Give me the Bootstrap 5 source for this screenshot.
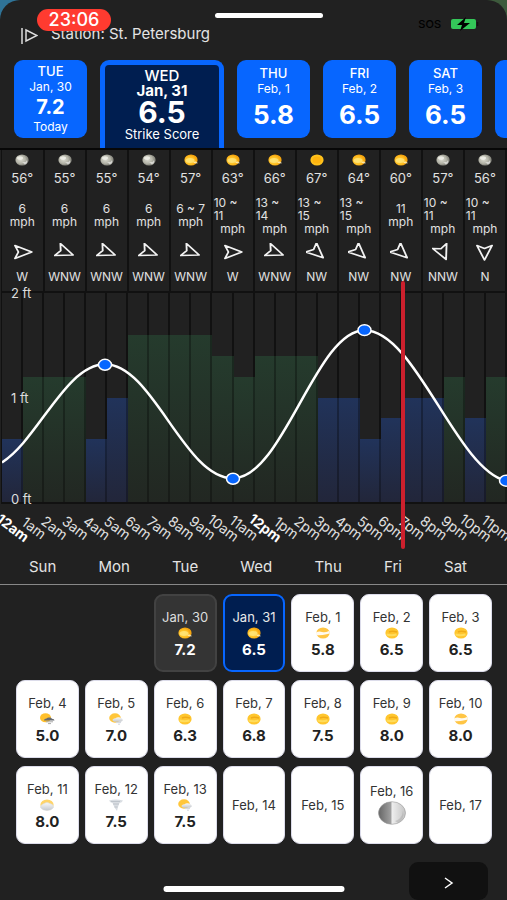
<!DOCTYPE html>
<html lang="en">
<head>
<meta charset="utf-8">
<meta name="viewport" content="width=device-width, initial-scale=1">
<title>Strike Score – St. Petersburg</title>
<link href="https://cdn.jsdelivr.net/npm/bootstrap@5.3.0/dist/css/bootstrap.min.css" rel="stylesheet">
<style>
  :root { --ink:#212121; --blue:#0766ff; --navy:#001e50; --rule:#111; }
  body { font-family:Inter,"Liberation Sans",sans-serif; background:linear-gradient(90deg,#2f7397 50%,#3d5a3c 50%); color:#e4e4e4; overflow-x:hidden; }
  button { font-family:inherit; }
  .sheet { background:var(--ink); border-radius:20px 20px 0 0; overflow:hidden; }
  .topbar { height:60px; padding:24px 20px 0; gap:13px; font-size:15px; line-height:20px; }
  .grabber { left:53%; top:13px; width:108px; height:5px; background:#fff; }
  .clock { left:37px; top:9px; width:74px; height:22px; background:#ff3b30; color:#fff; font-size:18px; line-height:22px; font-weight:500; }
  .status { right:28px; top:15px; color:#000; font-size:11px; line-height:18px; font-weight:500; }
  .days { height:88px; gap:13px; padding-left:14px; }
  .day { width:73px; height:78px; border:0; border-radius:9px; background:var(--blue); color:#fff; font-size:12px; line-height:16px; padding:0; }
  .day .name { font-size:13px; font-weight:500; }
  .day .score { font-size:26px; line-height:36px; font-weight:700; }
  .day .score.short { font-size:20px; line-height:24px; }
  .day.picked { width:124px; height:89px; border:5px solid var(--blue); border-bottom:0; border-radius:9px 9px 0 0; background:var(--navy); font-size:13px; line-height:16px; padding-top:3px; }
  .day.picked .name { font-size:15px; line-height:15px; }
  .day.picked .date { font-size:15px; line-height:15px; font-weight:700; }
  .day.picked .score { font-size:30px; line-height:28px; }
  .hourly { border-top:2px solid #070707; padding-left:1px; }
  .hours { table-layout:fixed; font-size:12px; line-height:13px; color:#e2e2e2; border-left:1px solid var(--rule); }
  .hours td { padding:0; text-align:center; vertical-align:middle; border-right:2px solid var(--rule); white-space:nowrap; }
  .r-sky { height:20px; } .r-temp { height:17px; font-size:13px; } .r-wind { height:56px; }
  .r-dir { height:17px; } .r-name { height:30px; font-size:12px; }
  .hours svg { display:block; margin:auto; }
  .speed { display:block; text-align:left; padding-left:1px; }
  .plot { height:213px; border-top:2px solid var(--rule); border-bottom:2px solid var(--rule); border-left:1px solid var(--rule); }
  .slot { flex:1 1 0; display:flex; align-items:flex-end; background:linear-gradient(90deg,transparent calc(100% - 2px),var(--rule) 0); }
  .slot i { display:block; width:100%; border-right:2px solid transparent; }
  .good i { background:linear-gradient(90deg,transparent calc(100% - 2px),rgba(0,0,0,.3) 0) border-box,linear-gradient(#253b2d,#222722) border-box; }
  .fair i { background:linear-gradient(90deg,transparent calc(100% - 2px),rgba(0,0,0,.3) 0) border-box,linear-gradient(#21335a,#22263a) border-box; }
  .tide { inset:0; width:100%; height:100%; }
  .feet { left:9px; font-size:13px; line-height:16px; color:#ddd; }
  .feet.zero { bottom:-5px; }
  .now { left:79%; top:-12px; width:4px; height:268px; border-radius:2px; background:#cc202d; z-index:2; }
  .ticks { height:45px; padding:2px 0 0 2px; font-size:14px; line-height:16px; color:#e0e0e0; }
  .ticks span { flex:1 1 0; min-width:0; display:flex; justify-content:center; align-items:center; white-space:nowrap; }
  .ticks b, .ticks em { flex:none; font-style:normal; font-weight:400; transform:rotate(37deg); }
  .ticks b { font-weight:700; color:#fff; }
  .weekdays { padding:7px 40px 6px 29px; font-size:15px; line-height:22px; border-bottom:1px solid #888; }
  .month { display:grid; grid-template-columns:repeat(7,1fr); gap:8px 6px; padding:9px 15px 0 16px; }
  .cell { height:78px; border:1px solid #dcdcea; border-radius:9px; background:#fff; color:#333; font-size:13px; line-height:16px; padding:0; white-space:nowrap; }
  .cell svg { margin:2px 0; }
  .cell strong { font-size:15px; line-height:17px; color:#222; }
  .cell.past { background:#343434; border:2px solid #424242; color:#ddd; }
  .cell.today { background:var(--navy); border:2px solid var(--blue); color:#e8e8e8; }
  .past strong, .today strong { color:#fff; }
  .foot { padding-top:18px; padding-right:19px; }
  .next { width:79px; height:38px; border:0; border-radius:9px; background:#111; color:#fff; }
  .home { bottom:8px; width:181px; height:6px; background:#fff; }
</style>
</head>
<body>
<svg width="0" height="0" class="position-absolute" aria-hidden="true">
  <defs>
    <radialGradient id="gSun" cx=".4" cy=".55"><stop offset="0" stop-color="#ffd93a"/><stop offset=".75" stop-color="#fdbb20"/><stop offset="1" stop-color="#f5a50e"/></radialGradient>
    <radialGradient id="gMoon" cx=".4" cy=".45"><stop offset="0" stop-color="#dcdcd2"/><stop offset=".7" stop-color="#b5b5a9"/><stop offset="1" stop-color="#8d8d84"/></radialGradient>
    <linearGradient id="gCloud" x2="0" y2="1"><stop offset="0" stop-color="#fafafa"/><stop offset="1" stop-color="#c4c8cd"/></linearGradient>
    <linearGradient id="gHalf"><stop offset="0" stop-color="#666"/><stop offset=".46" stop-color="#a0a0a0"/><stop offset=".5" stop-color="#eee"/><stop offset="1" stop-color="#c4c4c4"/></linearGradient>
    <symbol id="moon" viewBox="0 0 16 12"><ellipse cx="8" cy="6" rx="6.6" ry="5.6" fill="url(#gMoon)"/><ellipse cx="6" cy="4" rx="3" ry="1.8" fill="#f4f4ee" opacity=".8"/><path d="M8 8q4 1 5-2q1 3-2 4.500z" fill="#fff" opacity=".6"/></symbol>
    <symbol id="sun" viewBox="0 0 16 12"><ellipse cx="8" cy="6" rx="6.600" ry="5.600" fill="#ffc21c"/><ellipse cx="8" cy="6" rx="4.500" ry="3.600" fill="#ffb40f"/></symbol>
    <symbol id="hazy" viewBox="0 0 16 12"><ellipse cx="8" cy="6" rx="6.600" ry="5.600" fill="url(#gSun)"/><ellipse cx="7" cy="6.500" rx="4.500" ry="2.500" fill="#ffe98a" opacity=".7"/><path d="M10.500 9q0-1.200 1.300-1.400q1.500-.6 2.200.6q1 .3.500 1.300z" fill="#fff3c4" opacity=".8"/></symbol>
    <symbol id="veil" viewBox="0 0 16 12"><ellipse cx="8" cy="6" rx="6.600" ry="5.600" fill="#ffc62e"/><path d="M5 5q3-1.600 8 0" stroke="#f0ab18" stroke-width="1.600" fill="none"/><path d="M2.500 7.500q5 1.500 10 0" stroke="#ffdc5c" stroke-width="2" fill="none"/></symbol>
    <symbol id="band" viewBox="0 0 16 12"><ellipse cx="8" cy="6" rx="6.600" ry="5.600" fill="#ffc544"/><path d="M1 5.500q3-1.500 6-.5t7-1l1 2.500q-4 .8-6 1.200t-8 .5z" fill="#fffaf0"/></symbol>
    <symbol id="storm" viewBox="0 0 16 12"><ellipse cx="6.500" cy="4.800" rx="5.500" ry="4.500" fill="#ffc02c"/><path d="M5 7.500q0-2 2.500-2q1-1.500 3.500-1q1 0 2 1.200q2.500 0 2.500 1.800z" fill="#666a70"/><path d="M7 8.800h7M9 10.600h3" stroke="#aaa" stroke-width="1"/></symbol>
    <symbol id="rain" viewBox="0 0 16 12"><ellipse cx="7" cy="5" rx="5.800" ry="4.700" fill="#ffc63a"/><path d="M4.500 7.500q0-2 3-2.200q2-1.800 4.500-.8q2.500.5 3 2.700l-2 1.500H6z" fill="url(#gCloud)"/><path d="M8 9.600h5M10 11.200h2" stroke="#d3d7dd"/></symbol>
    <symbol id="cloud" viewBox="0 0 16 12"><ellipse cx="8" cy="5.800" rx="6.600" ry="5.400" fill="#ffd468"/><path d="M1.500 8.500q0-3 3.500-4q3-2 6 0q3.500.5 3.500 4q-2 3-6.500 3t-6.500-3z" fill="url(#gCloud)" stroke="#d2d6da" stroke-width=".5"/></symbol>
    <symbol id="twist" viewBox="0 0 16 12"><path d="M1 1.500q7-2 14 0q-1 2-3.500 2.500L10 8l-1 4L6.500 8.500 4.500 4Q2 3.500 1 1.500z" fill="#d9dde2"/><path d="M3 2.500h9M5 5h6M6.500 8h3" stroke="#b8bec5" stroke-width=".8"/></symbol>
    <symbol id="half" viewBox="0 0 28 24"><ellipse cx="14" cy="12" rx="13.500" ry="11.300" fill="url(#gHalf)" stroke="#999" stroke-width=".6"/><path d="M17 20q7-2 8-10q2 8-5 12z" fill="#aaa" opacity=".5"/></symbol>
  </defs>
</svg>

<main class="sheet position-relative d-flex flex-column min-vh-100">
  <header class="topbar position-relative d-flex">
    <svg width="18" height="16" viewBox="0 0 18 16" class="mt-1 flex-shrink-0" fill="none" stroke="#ddd" stroke-width="1.500"><path d="M2 0v16M6 2l11 5.500L6 13z"/></svg>
    <span class="text-nowrap">Station: St. Petersburg</span>
    <div class="grabber position-absolute translate-middle-x rounded-pill"></div>
    <time class="clock position-absolute rounded-pill text-center">23:06</time>
    <div class="status position-absolute d-flex align-items-center gap-2">
      <span>SOS</span>
      <svg width="30" height="14" viewBox="0 0 30 14"><rect x="2" y="2" width="25" height="10" rx="2" fill="#34c759"/><path d="M28.500 5v4" stroke="#111" stroke-width="1.500"/><path d="M17 0 8 8h5l-2 6 10-8h-6z" fill="#000"/></svg>
    </div>
  </header>

  <nav class="days d-flex align-items-start overflow-hidden" id="days" aria-label="Days"></nav>

  <section class="hourly">
    <table class="hours w-100" id="hours" aria-label="Hourly weather"></table>
    <div class="plot position-relative d-flex" id="plot">
      <svg class="tide position-absolute" viewBox="2 292 505 211" preserveAspectRatio="none">
        <path d="M2 463C38 440 66 364 105 364C153 364 184 479 233 479C283 479 316 329.500 364.500 329.500C415 329.500 456 469 505.500 481.500" fill="none" stroke="#fff" stroke-width="2.500"/>
        <g fill="var(--blue)" stroke="#fff" stroke-width="1.500"><ellipse cx="105" cy="364.500" rx="6.500" ry="5.500"/><ellipse cx="233" cy="479.500" rx="6.500" ry="5.500"/><ellipse cx="364.500" cy="329.500" rx="6.500" ry="5.500"/><ellipse cx="506" cy="481.500" rx="6.500" ry="5.500"/></g>
      </svg>
      <span class="feet position-absolute top-0 translate-middle-y">2 ft</span>
      <span class="feet position-absolute top-50 translate-middle-y">1 ft</span>
      <span class="feet zero position-absolute">0 ft</span>
      <div class="now position-absolute"></div>
    </div>
  </section>
  <div class="ticks d-flex" id="ticks"></div>

  <div class="weekdays d-flex justify-content-between"><span>Sun</span><span>Mon</span><span>Tue</span><span>Wed</span><span>Thu</span><span>Fri</span><span>Sat</span></div>
  <section class="month" id="month" aria-label="Month scores"><span></span><span></span></section>

  <footer class="foot mt-auto d-flex justify-content-end">
    <div class="home position-absolute start-50 translate-middle-x rounded-pill"></div>
    <button class="next" type="button" aria-label="Next"><svg width="12" height="14" viewBox="0 0 12 14" fill="none" stroke="#fff" stroke-width="1.500"><path d="M2 2l7 5-7 5"/></svg></button>
  </footer>
</main>

<script src="https://cdn.jsdelivr.net/npm/bootstrap@5.3.0/dist/js/bootstrap.bundle.min.js"></script>
<script>
  const put = (id, html) => document.getElementById(id).insertAdjacentHTML('beforeend', html);
  const icon = (n, w = 16, h = 12) => `<svg width="${w}" height="${h}" aria-hidden="true"><use href="#${n}"/></svg>`;

  const days = [['TUE','Jan, 30','7.2','Today'],['WED','Jan, 31','6.5','Strike Score'],['THU','Feb, 1','5.8'],['FRI','Feb, 2','6.5'],['SAT','Feb, 3','6.5'],['','','']];
  put('days', days.map(([n, d, s, note], i) =>
    `<button type="button" class="day flex-shrink-0 d-flex flex-column align-items-center ${i === 1 ? 'picked' : 'justify-content-center'}"><span class="name">${n}</span><span class="date">${d}</span><span class="score ${i ? '' : 'short'}">${s}</span>${note ? `<span>${note}</span>` : ''}</button>`).join(''));

  const hours = [['moon',56,'6','W'],['moon',55,'6','WNW'],['moon',55,'6','WNW'],['moon',54,'6','WNW'],['hazy',57,'6 ~ 7','WNW'],['hazy',63,'10 ~|11','W'],['hazy',66,'13 ~|14','WNW'],['sun',67,'13 ~|15','NW'],['hazy',64,'13 ~|15','NW'],['hazy',60,'11','NW'],['moon',57,'10 ~|11','NNW'],['moon',56,'10 ~|11','N']];
  const turn = { W:0, WNW:22.5, NW:45, NNW:67.5, N:90 };
  const row = (cls, f) => `<tr class="${cls}">${hours.map(h => `<td>${f(h)}</td>`).join('')}</tr>`;
  put('hours', row('r-sky', h => icon(h[0])) + row('r-temp', h => h[1] + '°') +
    row('r-wind', h => (h[2].includes('|') ? `<span class="speed">${h[2].replace('|', '<br>')}</span>` : h[2] + '<br>') + 'mph') +
    row('r-dir', h => `<svg width="21" height="18" viewBox="-9 -9 18 18" preserveAspectRatio="none" aria-hidden="true"><path transform="rotate(${turn[h[3]]})" d="M8 0-6.500-6.500-3.500 0-6.500 6.500z" fill="none" stroke="#f2f2f2" stroke-width="1.600" stroke-linejoin="round"/></svg>`) +
    row('r-name', h => h[3]));

  const bars = 'f3 g6 g6 g6 f3 f5 g8 g8 g8 g8 g7 g6 g7 g7 g7 f5 f5 f3 f4 f5 f5 g6 f4 g6'.split(' ');
  document.getElementById('plot').insertAdjacentHTML('afterbegin', bars.map(b =>
    `<div class="slot ${b[0] === 'g' ? 'good' : 'fair'}"><i style="height:${b[1]}0%"></i></div>`).join(''));
  put('ticks', bars.map((_, i) => {
    const tag = i % 12 ? 'em' : 'b';
    return `<span><${tag}>${i % 12 || 12}${i < 12 ? 'am' : 'pm'}</${tag}></span>`;
  }).join(''));

  const month = [['Jan, 30','hazy','7.2','past'],['Jan, 31','hazy','6.5','today'],['Feb, 1','band','5.8'],['Feb, 2','veil','6.5'],['Feb, 3','veil','6.5'],
    ['Feb, 4','storm','5.0'],['Feb, 5','rain','7.0'],['Feb, 6','veil','6.3'],['Feb, 7','veil','6.8'],['Feb, 8','veil','7.5'],['Feb, 9','veil','8.0'],['Feb, 10','band','8.0'],
    ['Feb, 11','cloud','8.0'],['Feb, 12','twist','7.5'],['Feb, 13','rain','7.5'],['Feb, 14'],['Feb, 15'],['Feb, 16','half'],['Feb, 17']];
  put('month', month.map(([d, n, s, c = '']) =>
    `<button type="button" class="cell d-flex flex-column align-items-center justify-content-center ${c}"><span>${d}</span>${n ? (n === 'half' ? icon(n, 28, 24) : icon(n)) : ''}${s ? `<strong>${s}</strong>` : ''}</button>`).join(''));
</script>
</body>
</html>
